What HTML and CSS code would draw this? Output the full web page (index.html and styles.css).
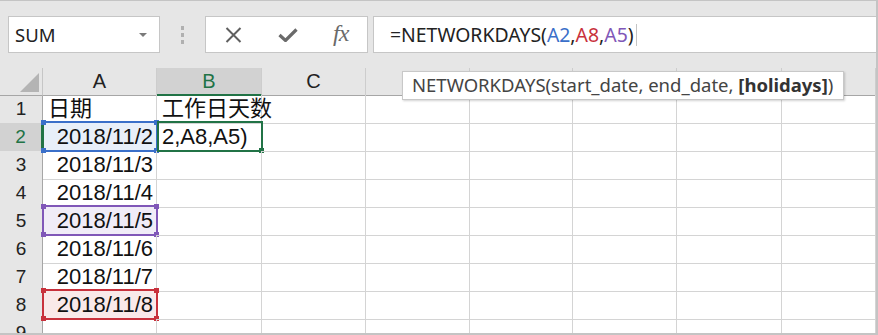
FILE: index.html
```html
<!DOCTYPE html>
<html lang="zh-CN">
<head>
  <meta charset="UTF-8" />
  <title>NETWORKDAYS</title>
  <link rel="stylesheet" href="styles.css">
</head>
<body>
  <div class="app">
    <div class="toolbar">
      <div class="name-box">
        <span>SUM</span>
        <span class="drop"></span>
      </div>
      <div class="grip"><i></i><i></i><i></i></div>
      <div class="fx-box">
        <svg class="ico x" width="17" height="16" viewBox="0 0 17 16"><path d="M1.5 1 L15.5 15 M15.5 1 L1.5 15" stroke="#5f5f5f" stroke-width="2" fill="none"/></svg>
        <svg class="ico ok" width="20" height="14" viewBox="0 0 20 14"><path d="M1.5 7 L7.5 12.5 L18.5 1.5" stroke="#6a6a6a" stroke-width="3.2" fill="none"/></svg>
        <span class="fx">fx</span>
      </div>
      <div class="formula">
        <span>=NETWORKDAYS(</span><span class="r-blue">A2</span>,<span class="r-red">A8</span>,<span class="r-purple">A5</span>)<span class="caret"></span>
      </div>
    </div>

    <div class="sheet">
      <div class="row head">
        <div class="corner"><span class="tri"></span></div>
        <div class="col">A</div>
        <div class="col sel">B</div>
        <div class="col">C</div>
        <div class="col"></div>
        <div class="col"></div>
        <div class="col"></div>
        <div class="col"></div>
        <div class="col"></div>
      </div>
      <div class="row">
        <div class="num">1</div>
        <div class="cell">日期</div>
        <div class="cell">工作日天数</div>
        <div class="cell"></div><div class="cell"></div><div class="cell"></div><div class="cell"></div><div class="cell"></div><div class="cell"></div>
      </div>
      <div class="row">
        <div class="num sel">2</div>
        <div class="cell date fill-blue">2018/11/2<span class="range blue"><b class="tl"></b><b class="tr"></b><b class="bl"></b><b class="br"></b></span></div>
        <div class="cell edit">2,A8,A5)<span class="active"><b class="br"></b></span></div>
        <div class="cell"></div><div class="cell"></div><div class="cell"></div><div class="cell"></div><div class="cell"></div><div class="cell"></div>
      </div>
      <div class="row">
        <div class="num">3</div>
        <div class="cell date">2018/11/3</div>
        <div class="cell"></div><div class="cell"></div><div class="cell"></div><div class="cell"></div><div class="cell"></div><div class="cell"></div><div class="cell"></div>
      </div>
      <div class="row">
        <div class="num">4</div>
        <div class="cell date">2018/11/4</div>
        <div class="cell"></div><div class="cell"></div><div class="cell"></div><div class="cell"></div><div class="cell"></div><div class="cell"></div><div class="cell"></div>
      </div>
      <div class="row">
        <div class="num">5</div>
        <div class="cell date fill-purple">2018/11/5<span class="range purple"><b class="tl"></b><b class="tr"></b><b class="bl"></b><b class="br"></b></span></div>
        <div class="cell"></div><div class="cell"></div><div class="cell"></div><div class="cell"></div><div class="cell"></div><div class="cell"></div><div class="cell"></div>
      </div>
      <div class="row">
        <div class="num">6</div>
        <div class="cell date">2018/11/6</div>
        <div class="cell"></div><div class="cell"></div><div class="cell"></div><div class="cell"></div><div class="cell"></div><div class="cell"></div><div class="cell"></div>
      </div>
      <div class="row">
        <div class="num">7</div>
        <div class="cell date">2018/11/7</div>
        <div class="cell"></div><div class="cell"></div><div class="cell"></div><div class="cell"></div><div class="cell"></div><div class="cell"></div><div class="cell"></div>
      </div>
      <div class="row">
        <div class="num">8</div>
        <div class="cell date fill-red">2018/11/8<span class="range red"><b class="tl"></b><b class="tr"></b><b class="bl"></b><b class="br"></b></span></div>
        <div class="cell"></div><div class="cell"></div><div class="cell"></div><div class="cell"></div><div class="cell"></div><div class="cell"></div><div class="cell"></div>
      </div>
      <div class="row last">
        <div class="num">9</div>
        <div class="cell"></div><div class="cell"></div><div class="cell"></div><div class="cell"></div><div class="cell"></div><div class="cell"></div><div class="cell"></div><div class="cell"></div>
      </div>

      <div class="tip">NETWORKDAYS(start_date, end_date, <b>[holidays]</b>)</div>
    </div>
  </div>
</body>
</html>
```

FILE: styles.css
```css
* {
  box-sizing: border-box;
}
body {
  margin: 0;
  background: #e6e6e6;
  font-family: "Noto Sans", Arial, sans-serif;
}
.app {
  width: 878px;
  height: 335px;
  border-top: 1px solid #c4c4c4;
  border-right: 2px solid #c4c4c4;
  border-bottom: 2px solid #c4c4c4;
  background: #e6e6e6;
  overflow: hidden;
}

/* formula bar */
.toolbar {
  height: 67px;
  display: flex;
  align-items: flex-start;
  padding: 15px 0 0 8px;
}
.name-box {
  width: 152px;
  height: 37px;
  background: #fff;
  border: 1px solid #c6c6c6;
  display: flex;
  align-items: center;
  justify-content: space-between;
  padding: 0 12px 0 6px;
  font-size: 18.5px;
  color: #222;
}
.drop {
  width: 0;
  height: 0;
  border-left: 4px solid transparent;
  border-right: 4px solid transparent;
  border-top: 4px solid #7a7a7a;
}
.grip {
  width: 45px;
  height: 37px;
  display: flex;
  flex-direction: column;
  align-items: center;
  justify-content: center;
  gap: 3px;
}
.grip i {
  width: 3px;
  height: 4px;
  background: #b0b0b0;
}
.fx-box {
  width: 163px;
  height: 37px;
  background: #fff;
  border: 1px solid #c6c6c6;
  display: flex;
  align-items: center;
  padding-left: 19px;
}
.ok {
  margin-left: 36px;
}
.fx {
  margin-left: 35px;
  font-family: "Liberation Serif", serif;
  font-style: italic;
  font-size: 24px;
  color: #6a6a6a;
  margin-top: -3px;
  letter-spacing: -1px;
}
.formula {
  flex: 1;
  margin-left: 5px;
  height: 37px;
  background: #fff;
  border: 1px solid #c6c6c6;
  border-right: none;
  display: flex;
  align-items: center;
  padding-left: 16px;
  font-size: 19.4px;
  color: #222;
  white-space: pre;
}
.r-blue { color: #3a6fc9; }
.r-red { color: #c8313c; }
.r-purple { color: #8057b8; }
.caret {
  width: 1px;
  height: 22px;
  background: #c4c4c4;
  margin-left: 2px;
}

/* sheet */
.sheet {
  position: relative;
  background: #fff;
}
.row {
  display: grid;
  grid-template-columns: 43px 114px 105px 104px 104px 103px 104px 105px 1fr;
  height: 28px;
  font-family: "Liberation Sans", "Noto Sans CJK SC", sans-serif;
}
.row.head {
  height: 27px;
  background: #e6e6e6;
}
.row.last {
  height: 14px;
  overflow: hidden;
}
.corner {
  position: relative;
  border-right: 1px solid #c6c6c6;
  border-bottom: 1px solid #a6a6a6;
}
.tri {
  position: absolute;
  right: 3px;
  bottom: 3px;
  width: 0;
  height: 0;
  border-left: 19px solid transparent;
  border-bottom: 19px solid #b4b4b4;
}
.col {
  border-right: 1px solid #cdcdcd;
  border-bottom: 1px solid #a6a6a6;
  text-align: center;
  font-size: 20px;
  line-height: 26px;
  color: #222;
}
.col.sel {
  background: #d2d2d2;
  color: #217346;
  border-bottom: 2px solid #217346;
}
.num {
  background: #e6e6e6;
  border-right: 1px solid #a6a6a6;
  border-bottom: 1px solid #cdcdcd;
  text-align: center;
  font-size: 19px;
  line-height: 28px;
  color: #222;
}
.num.sel {
  background: #d2d2d2;
  color: #217346;
  border-right: 2px solid #217346;
}
.cell {
  position: relative;
  border-right: 1px solid #d4d4d4;
  border-bottom: 1px solid #d4d4d4;
  font-size: 22px;
  line-height: 28px;
  color: #111;
  padding-left: 5px;
  white-space: nowrap;
}
.cell.date {
  text-align: right;
  padding: 0 3px 0 0;
}
.fill-blue { background: #e8eff9; }
.fill-purple { background: #f0ecf7; }
.fill-red { background: #f9e9e9; }

.range,
.active {
  position: absolute;
  top: -2px;
  left: -1px;
  right: -2px;
  bottom: -1px;
  border: 2px solid;
}
.range.blue { border-color: #3a6fc9; border-left-color: #217346; }
.range.purple { border-color: #8057b8; }
.range.red { border-color: #c8313c; }
.active {
  left: 0;
  border-color: #217346;
}
.range b,
.active b {
  position: absolute;
  width: 5px;
  height: 5px;
}
.blue b { background: #3a6fc9; }
.purple b { background: #8057b8; }
.red b { background: #c8313c; }
.active b { background: #217346; }
.tl { top: -3px; left: -3px; }
.tr { top: -3px; right: -3px; }
.bl { bottom: -3px; left: -3px; }
.br { bottom: -3px; right: -3px; }

/* function hint */
.tip {
  position: absolute;
  left: 402px;
  top: 3px;
  width: 442px;
  height: 29px;
  background: #fff;
  border: 1px solid #c8c8c8;
  box-shadow: 1px 1px 2px rgba(0, 0, 0, 0.18);
  padding-left: 9px;
  font-size: 18.5px;
  line-height: 26px;
  color: #444;
  white-space: nowrap;
}
.tip b {
  color: #333;
}
```
